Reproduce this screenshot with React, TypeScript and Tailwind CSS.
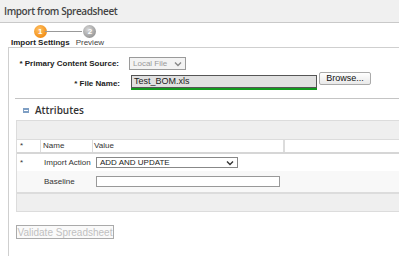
import React from "react";

const Chevron = ({ color = "#555" }: { color?: string }) => (
  <svg width="8" height="6" viewBox="0 0 8 6" fill="none">
    <path d="M1 1.5 L4 4.5 L7 1.5" stroke={color} strokeWidth="1.4" />
  </svg>
);

export default function App() {
  return (
    <div
      className="w-[399px] h-[256px] bg-white overflow-hidden relative text-[#333]"
      style={{ fontFamily: '"Liberation Sans", Arial, sans-serif' }}
    >
      {/* Title bar */}
      <div className="h-[23px] bg-[#f0f0f0] border-b border-[#c9c9c9] flex items-center pl-[4px]">
        <span
          className="text-[10px] font-semibold text-[#444] whitespace-nowrap tracking-[-0.4px]"
          style={{ fontFamily: '"Open Sans", sans-serif' }}
        >
          Import from Spreadsheet
        </span>
      </div>

      {/* Stepper */}
      <div className="h-[24px] relative flex items-start pl-[11px] gap-[6px] pt-[2px]">
        <div className="absolute left-[45px] top-[8px] w-[37px] h-px bg-[#999]" />
        <div className="flex flex-col items-center">
          <div className="w-[13px] h-[13px] rounded-full bg-[radial-gradient(circle_at_40%_35%,#ffc266,#f39019_70%)] flex items-center justify-center text-white text-[8px] font-bold leading-none">
            1
          </div>
          <span className="text-[8px] font-bold text-[#222] leading-none mt-[1px] whitespace-nowrap">Import Settings</span>
        </div>
        <div className="flex flex-col items-center">
          <div className="w-[13px] h-[13px] rounded-full bg-[radial-gradient(circle_at_40%_35%,#d8d8d8,#9a9a9a_70%)] flex items-center justify-center text-white text-[8px] font-bold leading-none">
            2
          </div>
          <span className="text-[8px] text-[#444] leading-none mt-[1px]">Preview</span>
        </div>
      </div>

      {/* Main panel */}
      <div className="ml-[8px] w-[420px] h-[220px] border-l border-t border-[#cfcfcf] flex flex-col">
        {/* Form */}
        <div className="pt-[9px] flex flex-col">
          <div className="flex items-center h-[13px]">
            <div className="w-[110px] text-right text-[8px] font-bold text-[#222] whitespace-nowrap">* Primary Content Source:</div>
            <div className="ml-[10px] w-[57px] h-[13px] border border-[#9a9a9a] bg-[#f3f3f3] flex items-center justify-between px-[3px]">
              <span className="text-[8px] text-[#9a9a9a]">Local File</span>
              <Chevron color="#888" />
            </div>
          </div>
          <div className="flex items-start mt-[2px]">
            <div className="w-[111px] text-right text-[8px] font-bold text-[#222] mt-[6px] whitespace-nowrap">* File Name:</div>
            <div className="ml-[11px] flex flex-col mt-[3px]">
              <div className="w-[186px] h-[13px] border border-[#555] bg-[#e1e1e1] flex items-center px-[2px]">
                <span className="text-[9px] text-[#222]">Test_BOM.xls</span>
              </div>
              <div className="w-[186px] h-[2px] bg-[#119a1d]" />
            </div>
            <div className="ml-[2px] w-[52px] h-[13px] border border-[#aaa] rounded-[2px] bg-gradient-to-b from-white to-[#e9e9e9] flex items-center justify-center text-[9px] text-[#111]">
              Browse...
            </div>
          </div>
        </div>

        {/* Separator */}
        <div className="ml-[6px] mt-[8px] h-px bg-[#c4c4c4]" />

        {/* Attributes header */}
        <div className="h-[22px] flex items-center pl-[14px]">
          <div className="w-[6px] h-[5px] bg-[#7f9fc4] flex items-center justify-center">
            <div className="w-[4px] h-px bg-white" />
          </div>
          <span
            className="ml-[6px] text-[10px] font-semibold text-[#333]"
            style={{ fontFamily: '"Open Sans", sans-serif' }}
          >
            Attributes
          </span>
        </div>

        {/* Table */}
        <div className="ml-[7px] -mt-px border-t border-l border-[#dcdcdc] flex flex-col">
          <div className="h-[19px] bg-[#efefef] border-b border-[#dcdcdc]" />
          <div className="h-[14px] grid grid-cols-[24px_52px_192px_1fr] text-[8px] text-[#333] border-b-2 border-[#d6d6d6]">
            <div className="border-r border-[#dcdcdc] pl-[3px] flex items-center">*</div>
            <div className="border-r border-[#dcdcdc] pl-[2px] flex items-center">Name</div>
            <div className="border-r-2 border-[#dcdcdc] pl-[1px] flex items-center">Value</div>
            <div />
          </div>
          <div className="h-[17px] grid grid-cols-[24px_52px_1fr] items-center text-[8px] text-[#333]">
            <div className="pl-[3px]">*</div>
            <div className="pl-[3px] whitespace-nowrap">Import Action</div>
            <div className="pl-[3px]">
              <div className="w-[142px] h-[11px] border border-[#888] bg-white flex items-center justify-between px-[3px]">
                <span className="text-[8px] text-[#222]">ADD AND UPDATE</span>
                <Chevron color="#333" />
              </div>
            </div>
          </div>
          <div className="h-[21px] grid grid-cols-[24px_52px_1fr] items-center text-[8px] text-[#333] bg-[#f8f8f8]">
            <div />
            <div className="pl-[3px]">Baseline</div>
            <div className="pl-[3px]">
              <div className="w-[184px] h-[11px] border border-[#999] bg-white" />
            </div>
          </div>
          <div className="h-[20px] bg-[#efefef] border-t-2 border-b border-[#dcdcdc]" />
        </div>

        {/* Validate button */}
        <div className="ml-[7px] mt-[13px]">
          <div className="w-[98px] h-[14px] border border-[#aaa] bg-[#fafafa] flex items-center justify-center text-[10px] text-[#c0c0c0] whitespace-nowrap">
            Validate Spreadsheet
          </div>
        </div>
      </div>
    </div>
  );
}
